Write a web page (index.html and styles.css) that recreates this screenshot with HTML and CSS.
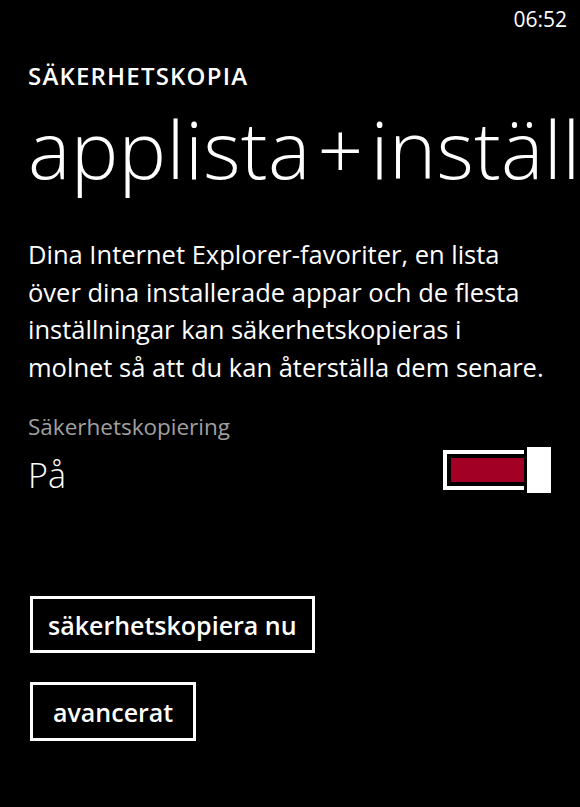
FILE: index.html
```html
<!DOCTYPE html>
<html lang="sv">
<head>
    <meta charset="UTF-8">
    <title>Säkerhetskopia</title>
    <link rel="stylesheet" href="styles.css">
</head>
<body>
    <!-- Statusfält -->
    <div class="status-bar">06:52</div>

    <div class="page">
        <h2 class="app-title">SÄKERHETSKOPIA</h2>
        <h1 class="page-title">applista<span class="plus">+</span>inställningar</h1>

        <p class="description">Dina Internet Explorer-favoriter, en lista<br>
        över dina installerade appar och de flesta<br>
        inställningar kan säkerhetskopieras i<br>
        molnet så att du kan återställa dem senare.</p>

        <div class="setting">
            <div class="setting-label">Säkerhetskopiering</div>
            <div class="setting-row">
                <span class="setting-value">På</span>
                <div class="toggle">
                    <div class="toggle-track">
                        <div class="toggle-fill"></div>
                    </div>
                    <div class="toggle-thumb"></div>
                </div>
            </div>
        </div>

        <div class="actions">
            <button class="btn">säkerhetskopiera nu</button>
            <button class="btn btn-short">avancerat</button>
        </div>
    </div>
</body>
</html>
```

FILE: styles.css
```css
/* Svart bakgrund som i telefonens mörka tema */
body {
  margin: 0;
  background-color: #000;
  color: #fff;
  font-family: "Open Sans", "Noto Sans", sans-serif;
  width: 580px;
  height: 807px;
  overflow: hidden;
}

.status-bar {
  height: 40px;
  text-align: right;
  padding-right: 13px;
  font-size: 21px;
  line-height: 38px;
}

.page {
  padding-left: 28px;
  overflow: hidden;
}

.app-title {
  margin: 18px 0 0;
  font-size: 24px;
  font-weight: 600;
  line-height: 36px;
  letter-spacing: 1.2px;
}

/* Stor rubrik som klipps vid högerkanten */
.page-title {
  margin: 6px 0 0;
  font-size: 80px;
  font-weight: 300;
  line-height: 96px;
  white-space: nowrap;
  letter-spacing: 0.3px;
}

.page-title .plus {
  margin: 0 7px;
}

.description {
  margin: 40px 0 0;
  font-size: 25.5px;
  line-height: 37.5px;
  white-space: nowrap;
}

.setting {
  margin-top: 26px;
}

.setting-label {
  color: #a0a0a0;
  font-size: 22.5px;
  line-height: 30px;
}

.setting-row {
  display: flex;
  justify-content: space-between;
  align-items: center;
  padding-right: 29px;
}

.setting-value {
  font-size: 34px;
  font-weight: 300;
  line-height: 46px;
  padding-top: 10px;
}

/* Reglage: ram + röd fyllnad + vit knapp */
.toggle {
  display: flex;
  align-items: center;
  gap: 3px;
}

.toggle-track {
  border: 4px solid #fff;
  border-right: none;
  padding: 4px 0 4px 4px;
}

.toggle-fill {
  width: 73px;
  height: 24px;
  background-color: #a20025;
}

.toggle-thumb {
  width: 24px;
  height: 46px;
  background-color: #fff;
}

.actions {
  margin-top: 98px;
  display: flex;
  flex-direction: column;
  align-items: flex-start;
  gap: 29px;
}

.btn {
  background: none;
  border: 3px solid #fff;
  color: #fff;
  font-family: inherit;
  font-size: 25px;
  font-weight: 600;
  height: 57px;
  padding: 0 15px;
  margin-left: 2px;
}

.btn-short {
  padding: 0 20px;
  height: 59px;
}
```
